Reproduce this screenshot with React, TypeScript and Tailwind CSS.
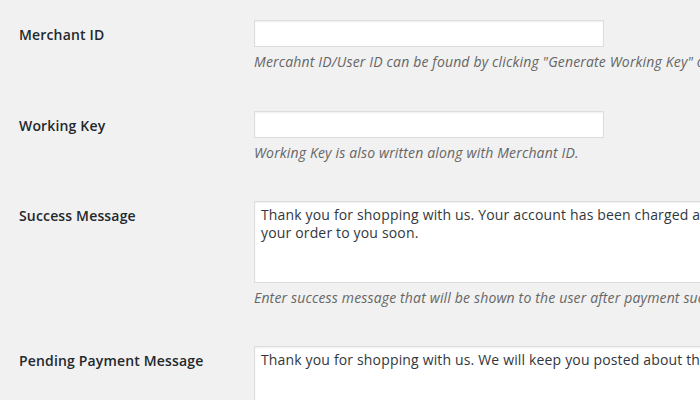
import React from "react";

const font = { fontFamily: '"Open Sans", "Liberation Sans", sans-serif' };

function Row({ label, className, children }: { label: string; className?: string; children: React.ReactNode }) {
    return (
        <div className={"flex " + (className ?? "")}>
            <div className="w-[235px] shrink-0 pt-[5px] text-[14px] leading-[20px] font-semibold text-[#23282d]">{label}</div>
            <div className="flex flex-col">{children}</div>
        </div>
    );
}

function Desc({ children }: { children: React.ReactNode }) {
    return <p className="mt-[4px] text-[14px] leading-[21px] italic text-[#666] whitespace-nowrap">{children}</p>;
}

export default function App() {
    return (
        <div className="w-[700px] h-[400px] overflow-hidden bg-[#f1f1f1] pl-[19px] pt-[20px] tracking-[0.16px]" style={font}>
            <Row label="Merchant ID" className="mb-[39px]">
                <input type="text" className="w-[350px] h-[27px] bg-white border border-[#ddd] shadow-[inset_0_1px_2px_rgba(0,0,0,0.07)] outline-none" />
                <Desc>Mercahnt ID/User ID can be found by clicking "Generate Working Key" of Settings tab in CCAvenue Dashboard.</Desc>
            </Row>
            <Row label="Working Key" className="mb-[38px]">
                <input type="text" className="w-[350px] h-[27px] bg-white border border-[#ddd] shadow-[inset_0_1px_2px_rgba(0,0,0,0.07)] outline-none" />
                <Desc>Working Key is also written along with Merchant ID.</Desc>
            </Row>
            <Row label="Success Message" className="mb-[38px]">
                <textarea
                    readOnly
                    className="w-[836px] h-[82px] resize-none bg-white border border-[#ddd] shadow-[inset_0_1px_2px_rgba(0,0,0,0.07)] outline-none px-[6px] py-[4px] text-[14px] leading-[18px] text-[#32373c] tracking-[0.16px]"
                    value="Thank you for shopping with us. Your account has been charged and your transaction is successful. We will be shipping your order to you soon."
                />
                <Desc>Enter success message that will be shown to the user after payment success.</Desc>
            </Row>
            <Row label="Pending Payment Message">
                <textarea
                    readOnly
                    className="w-[836px] h-[82px] resize-none bg-white border border-[#ddd] shadow-[inset_0_1px_2px_rgba(0,0,0,0.07)] outline-none px-[6px] py-[4px] text-[14px] leading-[18px] text-[#32373c] tracking-[0.16px]"
                    value="Thank you for shopping with us. We will keep you posted about the status of your order through e-mail."
                />
            </Row>
        </div>
    );
}
